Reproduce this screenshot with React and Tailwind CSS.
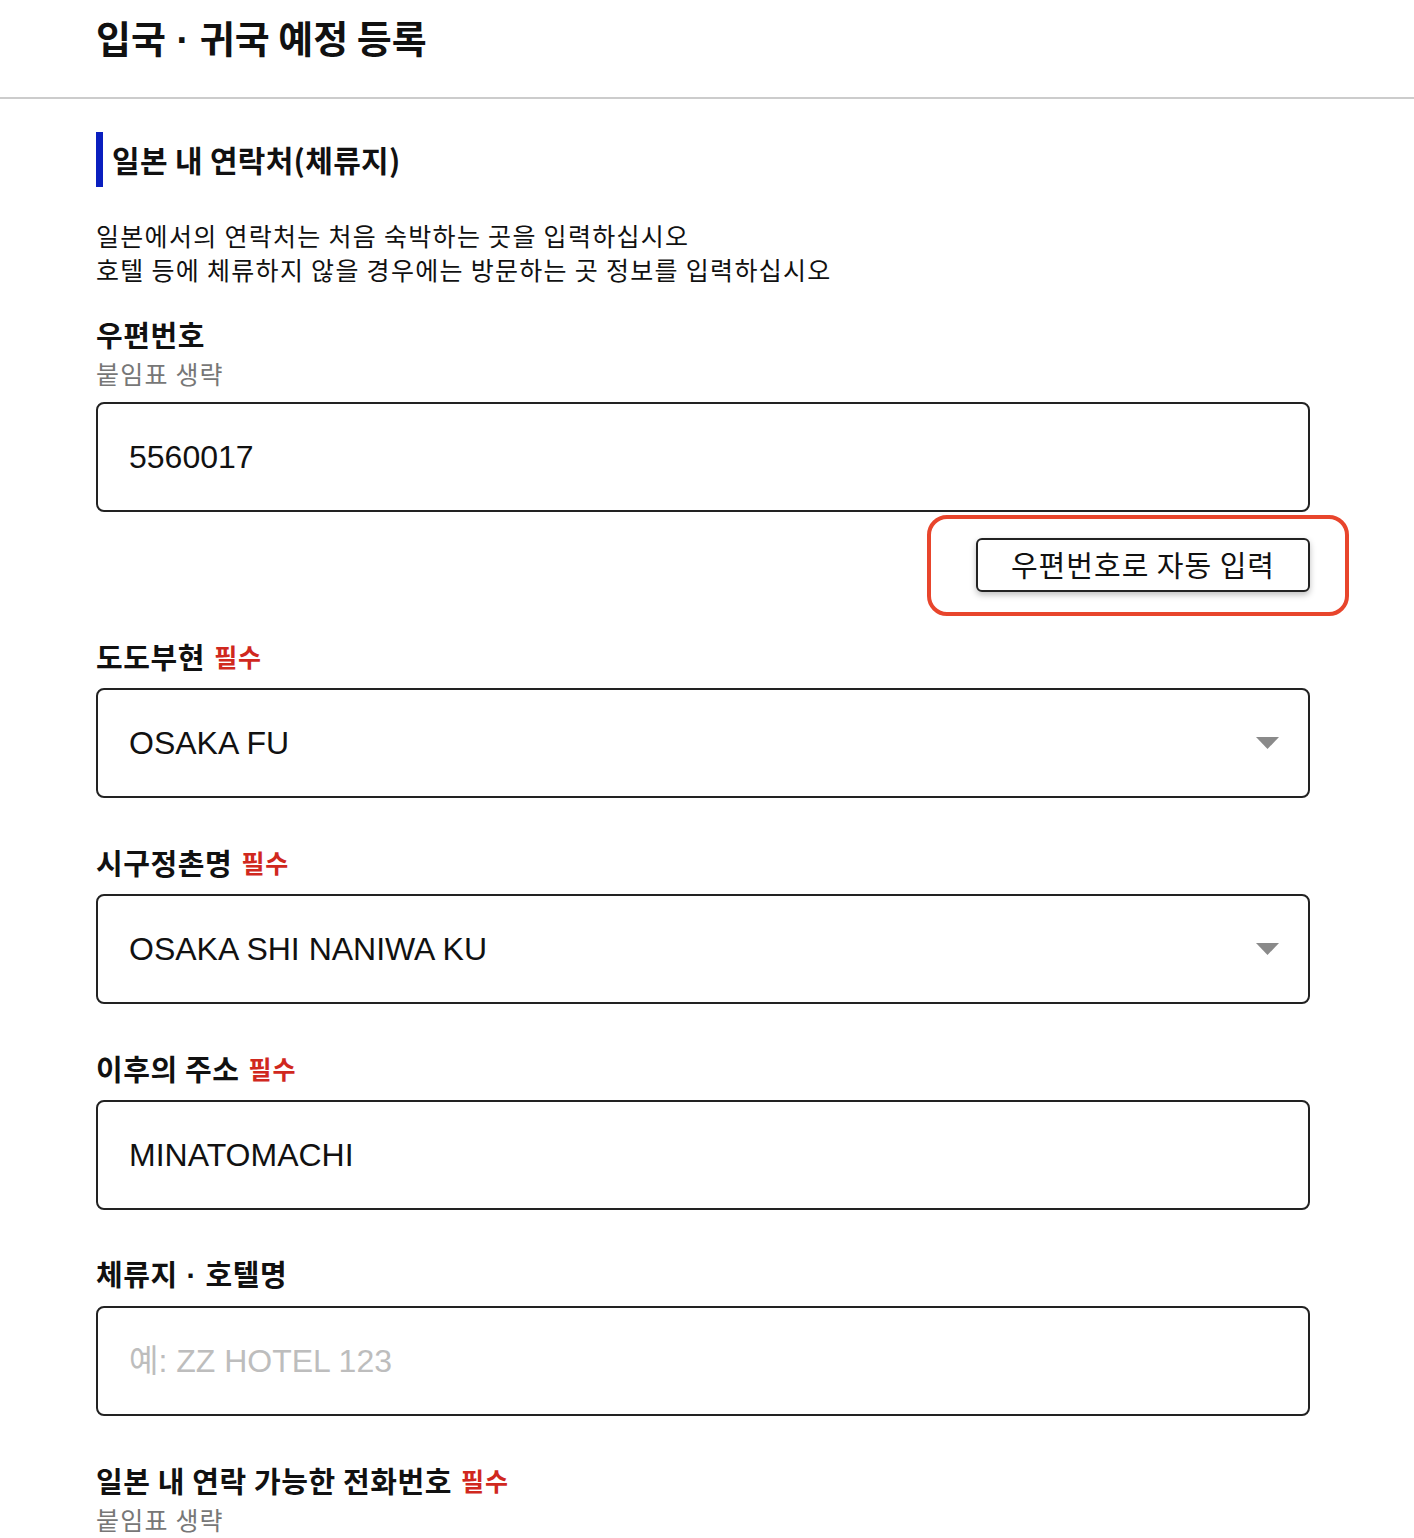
const kr = { fontFamily: '"Noto Sans CJK KR", "Noto Sans", sans-serif' };
const latin = { fontFamily: '"Liberation Sans", "Noto Sans CJK KR", sans-serif' };

function Dot() {
  return <span style={latin} className="font-bold"> · </span>;
}

function Label({ children, required, hint }) {
  return (
    <div className="mb-[11px]">
      <div className="flex items-center gap-[9px] h-[40px]">
        <span className="text-[29px] font-bold tracking-[0.6px] text-[#111]">{children}</span>
        {required && <span className="text-[25px] font-bold tracking-[0.8px] text-[#d0281e]">필수</span>}
      </div>
      {hint && <div className="text-[25px] tracking-[1.2px] leading-[36px] text-[#777]">{hint}</div>}
    </div>
  );
}

function TextBox({ value, placeholder }) {
  return (
    <div className="h-[110px] border-2 border-[#222] rounded-[8px] flex items-center px-[31px]" style={latin}>
      {value ? (
        <span className="text-[32px] text-[#111]">{value}</span>
      ) : (
        <span className="text-[32px] text-[#bdbdbd]">{placeholder}</span>
      )}
    </div>
  );
}

function SelectBox({ value }) {
  return (
    <div className="h-[110px] border-2 border-[#222] rounded-[8px] flex items-center justify-between pl-[31px] pr-[29px]" style={latin}>
      <span className="text-[32px] text-[#111]">{value}</span>
      <svg width="23" height="12" viewBox="0 0 23 12">
        <path d="M0 0 H23 L11.5 12 Z" fill="#8a8a8a" />
      </svg>
    </div>
  );
}

export default function App() {
  return (
    <div className="bg-white min-h-screen text-[#111]" style={kr}>
      <header className="h-[99px] border-b-2 border-[#cccccc] flex items-center pl-[96px]">
        <h1 className="text-[38px] font-bold pb-[21px]">
          입국<Dot />귀국 예정 등록
        </h1>
      </header>

      <main className="pl-[96px] pr-[104px] pt-[33px] pb-[40px]">
        <div className="flex items-center h-[55px] border-l-[7px] border-[#0a1fbf] pl-[9px]">
          <h2 className="text-[30px] font-bold tracking-[0.3px]">일본 내 연락처(체류지)</h2>
        </div>

        <p className="mt-[31px] text-[25px] tracking-[1.3px] leading-[34px]">
          일본에서의 연락처는 처음 숙박하는 곳을 입력하십시오
          <br />
          호텔 등에 체류하지 않을 경우에는 방문하는 곳 정보를 입력하십시오
        </p>

        <div className="mt-[29px]">
          <Label hint="붙임표 생략">우편번호</Label>
          <TextBox value="5560017" />
          <div className="flex justify-end mt-[26px]">
            <div className="relative">
              <button className="h-[54px] w-[334px] border-2 border-[#222] rounded-[6px] bg-white text-[29px] tracking-[1px] text-[#111] shadow-[0_3px_6px_rgba(0,0,0,0.25)]">
                우편번호로 자동 입력
              </button>
              <div className="absolute -left-[49px] -right-[39px] -top-[23px] -bottom-[24px] border-[4px] border-[#e8452c] rounded-[20px] pointer-events-none"></div>
            </div>
          </div>
        </div>

        <div className="mt-[45px]">
          <Label required>도도부현</Label>
          <SelectBox value="OSAKA FU" />
        </div>

        <div className="mt-[45px]">
          <Label required>시구정촌명</Label>
          <SelectBox value="OSAKA SHI NANIWA KU" />
        </div>

        <div className="mt-[45px]">
          <Label required>이후의 주소</Label>
          <TextBox value="MINATOMACHI" />
        </div>

        <div className="mt-[45px]">
          <Label>
            체류지<Dot />호텔명
          </Label>
          <TextBox placeholder="예: ZZ HOTEL 123" />
        </div>

        <div className="mt-[45px]">
          <Label required hint="붙임표 생략">일본 내 연락 가능한 전화번호</Label>
        </div>
      </main>
    </div>
  );
}
